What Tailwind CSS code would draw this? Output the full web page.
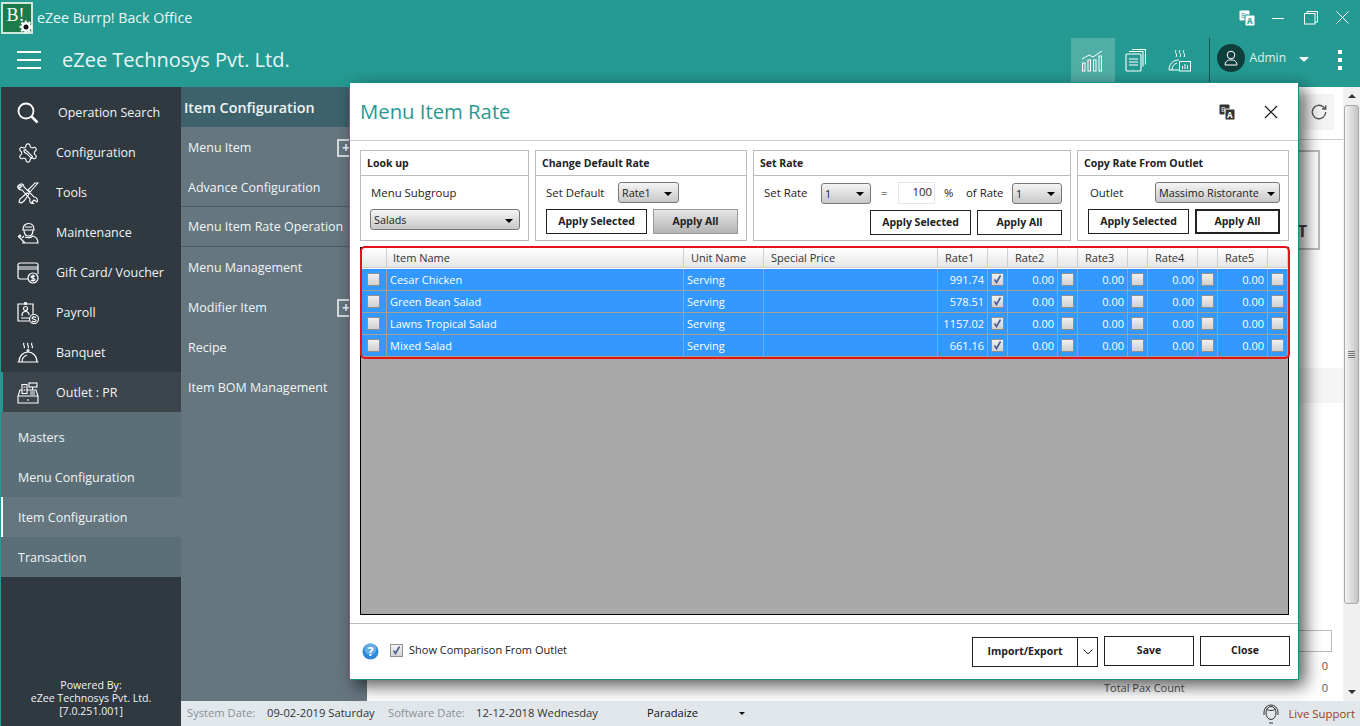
<!DOCTYPE html>
<html lang="en">
<head>
  <meta charset="UTF-8" />
  <title>eZee Burrp! Back Office</title>
  <script src="https://cdn.jsdelivr.net/npm/@tailwindcss/browser@4"></script>
</head>
<body class="bg-white">
<div class="relative w-[1360px] h-[726px] overflow-hidden flex flex-col bg-[#259a92] font-['Open_Sans','Noto_Sans',sans-serif] text-[12px]">

  <!-- window title bar -->
  <div class="h-[35px] flex items-center text-white shrink-0">
    <div class="relative ml-[1px] w-[32px] h-[32px] bg-[#1d7a4b] border-2 border-[#cfe6d8] flex items-start justify-center">
      <span class="font-['Liberation_Serif',serif] text-[18px] leading-[22px] text-white pr-[3px]">B!</span>
      <svg class="absolute right-[-2px] bottom-[-2px]" width="14" height="14" viewBox="0 0 14 14"><circle cx="7" cy="7" r="5" fill="#fff"/><circle cx="7" cy="7" r="5.500" fill="none" stroke="#fff" stroke-width="2" stroke-dasharray="2 2"/><circle cx="7" cy="7" r="2.500" fill="#111"/></svg>
    </div>
    <span class="ml-[4px] text-[14.2px] text-[#eaf6f5]">eZee Burrp! Back Office</span>
    <div class="ml-auto flex items-center">
      <svg width="16" height="16" viewBox="0 0 16 16"><rect x="0.5" y="0.5" width="10" height="10" rx="1" fill="#fff"/><rect x="6" y="5" width="10" height="11" rx="1" fill="#fff" stroke="#259a92"/><text x="8" y="14" font-size="8" font-weight="700" fill="#259a92" font-family="Open Sans">A</text><text x="2" y="8" font-size="7" fill="#259a92" font-family="Open Sans">B</text></svg>
      <svg class="ml-[17px]" width="12" height="12" viewBox="0 0 12 12"><path d="M0 6.500h12" stroke="#fff"/></svg>
      <svg class="ml-[20px]" width="14" height="14" viewBox="0 0 14 14" fill="none" stroke="#fff"><rect x="0.5" y="2.500" width="10.500" height="10.500"/><path d="M3 2.500V.5h10.500V11h-2.500"/></svg>
      <svg class="ml-[18px] mr-[11px]" width="13" height="13" viewBox="0 0 13 13"><path d="M.5.5l12 12M12.500.5l-12 12" stroke="#fff"/></svg>
    </div>
  </div>

  <!-- top nav -->
  <div class="h-[52px] flex items-center text-white shrink-0">
    <div class="ml-[17px] mb-[2px] w-[24px] flex flex-col gap-[6px]">
      <div class="h-[2px] bg-white"></div>
      <div class="h-[2px] bg-white"></div>
      <div class="h-[2px] bg-white"></div>
    </div>
    <span class="ml-[21px] mb-[2px] text-[20px] text-[#eaf6f5]">eZee Technosys Pvt. Ltd.</span>
    <div class="ml-auto flex items-center h-[44px] mb-[2px]">
      <div class="w-[44px] h-[44px] bg-white/20 flex items-center justify-center">
        <svg width="24" height="24" viewBox="0 0 24 24" fill="none" stroke="#fff" stroke-width="1"><path d="M1 11l7-4 4 2 9-6"/><rect x="1.500" y="15" width="2.500" height="8"/><rect x="7" y="12" width="2.500" height="11"/><rect x="12.500" y="12" width="2.500" height="11"/><rect x="18" y="8" width="2.500" height="15"/></svg>
      </div>
      <svg class="ml-[10px]" width="21" height="23" viewBox="0 0 21 23" fill="none" stroke="#fff" stroke-width="1.100"><rect x="1" y="5" width="15" height="17" rx="1"/><path d="M4 2.500h14v15M7 .5h13.500v15M4 10h9M4 13h9M4 16h9"/></svg>
      <svg class="ml-[22px]" width="23" height="23" viewBox="0 0 23 23" fill="none" stroke="#fff" stroke-width="1"><path d="M8 1c-2 2.500 2 4 0 7M12 1c-2 2.500 2 4 0 7M16 1c-2 2.500 2 4 0 7M1 21c0-6 4-10 10-10"/><path d="M1 21h10M4 21c0-4 2-6 5-7"/><rect x="11.500" y="12.500" width="11" height="9.500"/><path d="M14.500 20v-3M17 20v-5M19.500 20v-4"/></svg>
      <div class="ml-[18px] w-[1px] h-[44px] bg-[#17514e]"></div>
      <div class="ml-[7px] mb-[4px] w-[28px] h-[28px] rounded-full bg-[#0f3f3d] flex items-center justify-center">
        <svg width="18" height="18" viewBox="0 0 18 18" fill="none" stroke="#fff" stroke-width="1"><circle cx="9" cy="6" r="3.800"/><path d="M3 16c0-3 2-4.500 3.800-5h4.400c1.800.5 3.800 2 3.800 5z"/></svg>
      </div>
      <span class="ml-[5px] mb-[4px] text-[12px] text-[#dff1ef]">Admin</span>
      <div class="ml-[13px] mb-[2px] w-0 h-0 border-l-[5px] border-r-[5px] border-t-[5px] border-l-transparent border-r-transparent border-t-white"></div>
      <div class="ml-[29px] mr-[18px] flex flex-col gap-[4px]">
        <div class="w-[4px] h-[4px] bg-white"></div>
        <div class="w-[4px] h-[4px] bg-white"></div>
        <div class="w-[4px] h-[4px] bg-white"></div>
      </div>
    </div>
  </div>

  <!-- body -->
  <div class="flex-1 flex min-h-0">

    <!-- main sidebar -->
    <div class="w-[181px] shrink-0 bg-[#303840] border-l border-[#259a92] flex flex-col text-[#f0f4f5] text-[12.5px]">
      <div class="h-[45px] pt-[7px] flex items-center pl-[16px]">
        <svg class="w-[22px] h-[22px]" viewBox="0 0 22 22" fill="none" stroke="#fff"><circle cx="9" cy="9" r="7.500" stroke-width="1.800"/><path d="M14.500 14.500l6 6" stroke-width="2.500"/></svg>
        <span class="ml-[19px]">Operation Search</span>
      </div>
      <div class="h-[40px] pt-[2px] flex items-center pl-[16px]">
        <svg class="w-[22px] h-[22px]" viewBox="0 0 24 24" fill="none" stroke="#fff" stroke-width="1.200"><path d="M12.220 2h-.44a2 2 0 0 0-2 2v.18a2 2 0 0 1-1 1.730l-.43.25a2 2 0 0 1-2 0l-.15-.08a2 2 0 0 0-2.730.730l-.22.380a2 2 0 0 0 .730 2.730l.15.1a2 2 0 0 1 1 1.720v.510a2 2 0 0 1-1 1.740l-.15.090a2 2 0 0 0-.730 2.730l.22.380a2 2 0 0 0 2.730.730l.15-.08a2 2 0 0 1 2 0l.43.25a2 2 0 0 1 1 1.730V20a2 2 0 0 0 2 2h.44a2 2 0 0 0 2-2v-.18a2 2 0 0 1 1-1.730l.43-.25a2 2 0 0 1 2 0l.15.08a2 2 0 0 0 2.730-.730l.22-.390a2 2 0 0 0-.730-2.730l-.15-.08a2 2 0 0 1-1-1.740v-.5a2 2 0 0 1 1-1.740l.15-.090a2 2 0 0 0 .730-2.730l-.22-.380a2 2 0 0 0-2.730-.730l-.15.08a2 2 0 0 1-2 0l-.43-.25a2 2 0 0 1-1-1.730V4a2 2 0 0 0-2-2z"/><path d="M9 8c1 2 1 2 3 3l5 5-1.500 1.500-5-5c-2-.5-3-1.500-3-3.500z"/></svg>
        <span class="ml-[17px]">Configuration</span>
      </div>
      <div class="h-[40px] pt-[2px] flex items-center pl-[16px]">
        <svg class="w-[22px] h-[22px]" viewBox="0 0 22 22" fill="none" stroke="#fff" stroke-width="1.100"><path d="M21 1l-8 9-2-2 7-7zM10 11l-7 6-1 3 2 1 3-2 5-7z"/><path d="M2 3c2-2 5-1 5 2l10 10c3 0 4 3 3 5l-3-2-2 2 2 2c-3 0-5-2-4-5L5 8C2 8 0 6 1 4l2 2 2-2z"/></svg>
        <span class="ml-[17px]">Tools</span>
      </div>
      <div class="h-[40px] pt-[2px] flex items-center pl-[16px]">
        <svg class="w-[22px] h-[22px]" viewBox="0 0 22 22" fill="none" stroke="#fff" stroke-width="1.200"><path d="M6 8c0-4 2-6.500 5.500-6.500S17 4 17 8zM7 8c0 4 2 6 4.500 6S16 12 16 8M8 5h7"/><path d="M7 14l-2 2M5 21h16c0-4-2-6-5-7-2 2-6 2-8 1M1 14l6 6M1 15l2-2 1 2M6 21l2-1"/></svg>
        <span class="ml-[17px]">Maintenance</span>
      </div>
      <div class="h-[40px] pt-[2px] flex items-center pl-[16px]">
        <svg class="w-[22px] h-[22px]" viewBox="0 0 22 22" fill="none" stroke="#fff" stroke-width="1.200"><path d="M12 17H3a2 2 0 0 1-2-2V3a2 2 0 0 1 2-2h16a2 2 0 0 1 2 2v9"/><path d="M1 5h20M1 7h20" /><circle cx="16" cy="16" r="5"/><path d="M18 14.500c-1-1-4-1-4 .5s4 1 4 2.500-3 1.500-4 .5M16 12.500v7"/></svg>
        <span class="ml-[17px]">Gift Card/ Voucher</span>
      </div>
      <div class="h-[40px] pt-[2px] flex items-center pl-[16px]">
        <svg class="w-[22px] h-[22px]" viewBox="0 0 22 22" fill="none" stroke="#fff" stroke-width="1.200"><path d="M12 19H1V2h15v10"/><circle cx="8.500" cy="1.500" r="1"/><circle cx="8.500" cy="6.500" r="2"/><path d="M5 14c0-3 1.500-4.500 3.500-4.500S12 11 12 13M4 16h8"/><circle cx="17" cy="17" r="4.500"/><path d="M19 15.500c-1-1-4-1-4 .5s4 1 4 2.500-3 1.500-4 .5"/></svg>
        <span class="ml-[17px]">Payroll</span>
      </div>
      <div class="h-[40px] pt-[2px] flex items-center pl-[16px]">
        <svg class="w-[22px] h-[22px]" viewBox="0 0 22 22" fill="none" stroke="#fff" stroke-width="1.200"><path d="M7 1c-2 2 2 3 0 5M11 1c-2 2 2 3 0 5M15 1c-2 2 2 3 0 5M0.500 20h21M2 20c0-6 4-10 9-10s9 4 9 10M5 20c0-4 2-6 5-7"/><circle cx="11" cy="8.500" r="1"/></svg>
        <span class="ml-[17px]">Banquet</span>
      </div>
      <div class="h-[40px] pt-[2px] flex items-center bg-[#3c444c] border-l-[3px] border-[#259a92] -ml-[1px] pl-[14px]">
        <svg class="w-[22px] h-[22px]" viewBox="0 0 22 22" fill="none" stroke="#fff" stroke-width="1.100"><path d="M1 21h20v-7l-2-6H3l-2 6zM1 14h20M10 18h2"/><rect x="5" y="2.500" width="5" height="9" fill="#3c444c"/><rect x="12" y="1" width="8" height="4"/><path d="M15.500 5v3M6.500 5h2M6.500 8h2M13 10h5M13 12h5"/></svg>
        <span class="ml-[17px]">Outlet : PR</span>
      </div>
      <div class="bg-[#5a6f78]">
        <div class="h-[45px] pt-[7px] flex items-center pl-[17px]">Masters</div>
        <div class="h-[40px] pt-[2px] flex items-center pl-[17px]">Menu Configuration</div>
        <div class="h-[40px] pt-[2px] flex items-center pl-[15px] bg-[#66767f] border-l-2 border-white">Item Configuration</div>
        <div class="h-[40px] pt-[2px] flex items-center pl-[17px]">Transaction</div>
      </div>
      <div class="mt-auto pb-[8px] text-center text-[10.6px] leading-[13px]">
        Powered By:<br />eZee Technosys Pvt. Ltd.<br />[7.0.251.001]
      </div>
    </div>

    <div class="flex-1 flex flex-col min-w-0">
      <div class="flex-1 flex min-h-0">
        <!-- sub menu -->
        <div class="w-[186px] shrink-0 bg-[#66767f] text-[#f0f4f5] text-[12.5px] flex flex-col">
          <div class="h-[40px] pt-[2px] pl-[3px] flex items-center bg-[#3e626c] text-[14.3px] font-semibold">Item Configuration</div>
          <div class="h-[40px] pt-[2px] pl-[7px] pr-[12px] flex items-center">Menu Item
            <div class="ml-auto w-[18px] h-[18px] border-2 border-[#d5dbde] flex items-center justify-center text-[14px] font-bold leading-none">+</div>
          </div>
          <div class="h-[40px] pt-[3px] pl-[7px] flex items-center border-b border-[#4c5d66]">Advance Configuration</div>
          <div class="h-[40px] pt-[2px] pl-[7px] flex items-center border-b border-[#4c5d66]">Menu Item Rate Operation</div>
          <div class="h-[40px] pt-[2px] pl-[7px] flex items-center">Menu Management</div>
          <div class="h-[40px] pt-[2px] pl-[7px] pr-[12px] flex items-center">Modifier Item
            <div class="ml-auto w-[18px] h-[18px] border-2 border-[#d5dbde] flex items-center justify-center text-[14px] font-bold leading-none">+</div>
          </div>
          <div class="h-[40px] pt-[2px] pl-[7px] flex items-center">Recipe</div>
          <div class="h-[40px] pt-[2px] pl-[7px] flex items-center">Item BOM Management</div>
        </div>

        <!-- page behind the dialog -->
        <div class="flex-1 flex flex-col bg-white text-[#555]">
          <div class="h-[53px] border-b border-[#ccc] flex justify-end items-start pt-[7px] pr-[9px]">
            <div class="w-[31px] h-[36px] bg-[#f4f4f4] flex items-center justify-center">
              <svg width="18" height="18" viewBox="0 0 24 24" fill="none" stroke="#555" stroke-width="1.800"><path d="M21 12a9 9 0 1 1-3-6.700L21 8M21 3v5h-5"/></svg>
            </div>
          </div>
          <div class="self-end mt-[10px] mr-[23px] w-[400px] h-[100px] border-2 border-[#bbb] flex items-end justify-end pr-[11px] pb-[5px] text-[16px] font-bold text-[#444]">T</div>
          <div class="mt-[118px] h-[35px] bg-[#f5f5f5]"></div>
          <div class="mt-auto self-end mr-[11px] w-[300px] h-[22px] border border-[#bbb]"></div>
          <div class="flex justify-end pr-[15px] mt-[7px] h-[14px] items-center text-[11px]">0</div>
          <div class="flex justify-between items-center mt-[8px] h-[14px] pt-[1px] pr-[15px] pl-[737px] text-[11px]">
            <span>Total Pax Count</span><span>0</span>
          </div>
          <div class="h-[6px]"></div>
        </div>

        <!-- scrollbar -->
        <div class="w-[17px] shrink-0 bg-[#f0f0f0] flex flex-col items-center">
          <div class="h-[18px] flex items-center"><div class="w-0 h-0 border-l-[4px] border-r-[4px] border-b-[4px] border-l-transparent border-r-transparent border-b-[#333]"></div></div>
          <div class="w-[15px] h-[499px] border border-[#a8a8a8] rounded-[3px] bg-gradient-to-r from-[#f4f4f4] to-[#c4c4c4] flex flex-col items-center justify-center gap-[1px]">
            <div class="w-[7px] h-[1px] bg-[#777]"></div><div class="w-[7px] h-[1px] bg-[#777]"></div><div class="w-[7px] h-[1px] bg-[#777]"></div><div class="w-[7px] h-[1px] bg-[#777]"></div>
          </div>
          <div class="mt-auto h-[18px] flex items-center"><div class="w-0 h-0 border-l-[4px] border-r-[4px] border-t-[4px] border-l-transparent border-r-transparent border-t-[#333]"></div></div>
        </div>
      </div>

      <!-- status bar -->
      <div class="h-[25px] shrink-0 bg-[#e2e7eb] flex items-center pl-[6px] text-[11.2px] text-[#333]">
        <span class="text-[#8a9096] w-[80px]">System Date:</span>
        <span class="w-[121px]">09-02-2019 Saturday</span>
        <span class="text-[#8a9096] w-[88px]">Software Date:</span>
        <span class="w-[171px]">12-12-2018 Wednesday</span>
        <span class="text-[#111]">Paradaize</span>
        <div class="ml-[41px] w-0 h-0 border-l-[3px] border-r-[3px] border-t-[3px] border-l-transparent border-r-transparent border-t-[#111]"></div>
        <div class="ml-auto flex items-center mr-[5px]">
          <svg width="18" height="20" viewBox="0 0 18 20" fill="none" stroke="#333"><ellipse cx="9" cy="9" rx="5" ry="6.500"/><path d="M2 11V8a7 7 0 0 1 14 0v3M4 5c3 2 7 2 10 0M7 19h4"/></svg>
          <span class="ml-[8px] text-[11.4px] text-[#9c3b17]">Live Support</span>
        </div>
      </div>
    </div>
  </div>

  <!-- Menu Item Rate dialog -->
  <div class="absolute left-[349px] top-[82px] w-[950px] h-[598px] bg-white border border-[#1c8f87] shadow-[6px_6px_16px_rgba(0,0,0,0.65)] flex flex-col text-[#222]">
    <div class="h-[58px] shrink-0 border-b border-[#ccc] flex items-center pl-[10px]">
      <span class="text-[20.3px] text-[#259a92]">Menu Item Rate</span>
      <svg class="ml-auto" width="16" height="16" viewBox="0 0 16 16"><rect x="0.5" y="0.5" width="10" height="10" rx="1" fill="#333"/><rect x="6" y="5" width="10" height="11" rx="1" fill="#333" stroke="#fff"/><text x="8" y="14" font-size="8" font-weight="700" fill="#fff" font-family="Open Sans">A</text><text x="2" y="8" font-size="7" fill="#fff" font-family="Open Sans">B</text></svg>
      <svg class="ml-[29px] mr-[20px]" width="14" height="14" viewBox="0 0 14 14"><path d="M1 1l12 12M13 1L1 13" stroke="#111" stroke-width="1.200"/></svg>
    </div>

    <div class="ml-[10px] mt-[9px] flex gap-[6px] h-[91px] shrink-0 text-[11.4px]">
      <div class="w-[169px] border border-[#bbb] flex flex-col">
        <div class="h-[25px] pt-[2px] border-b border-[#bbb] pl-[6px] flex items-center font-bold text-[10.5px]">Look up</div>
        <div class="pl-[10px] mt-[9px] leading-[16px]">Menu Subgroup</div>
        <div class="ml-[9px] mt-[8px] w-[150px] h-[21px] pt-[2px] rounded-[3px] border border-[#777] bg-gradient-to-b from-[#f5f5f5] to-[#c8c8c8] flex items-center px-[3px] text-[10.8px]">Salads
          <div class="ml-auto mr-[3px] w-0 h-0 border-l-[4px] border-r-[4px] border-t-[4px] border-l-transparent border-r-transparent border-t-black"></div>
        </div>
      </div>

      <div class="w-[212px] border border-[#bbb] flex flex-col">
        <div class="h-[25px] pt-[2px] border-b border-[#bbb] pl-[6px] flex items-center font-bold text-[10.5px]">Change Default Rate</div>
        <div class="flex items-center mt-[6px] pl-[10px]">
          <span class="w-[72px]">Set Default</span>
          <div class="w-[61px] h-[21px] pt-[2px] rounded-[3px] border border-[#777] bg-gradient-to-b from-[#f5f5f5] to-[#c8c8c8] flex items-center px-[3px] text-[10.8px]">Rate1
            <div class="ml-auto mr-[3px] w-0 h-0 border-l-[4px] border-r-[4px] border-t-[4px] border-l-transparent border-r-transparent border-t-black"></div>
          </div>
        </div>
        <div class="flex mt-[6px] pl-[10px] gap-[6px] font-bold text-[10.5px]">
          <div class="w-[101px] h-[25px] pt-[1px] border border-[#222] flex items-center justify-center">Apply Selected</div>
          <div class="w-[85px] h-[25px] pt-[1px] border border-[#999] bg-gradient-to-b from-[#e6e6e6] to-[#b4b4b4] flex items-center justify-center">Apply All</div>
        </div>
      </div>

      <div class="w-[318px] border border-[#bbb] flex flex-col">
        <div class="h-[25px] pt-[2px] border-b border-[#bbb] pl-[6px] flex items-center font-bold text-[10.5px]">Set Rate</div>
        <div class="flex items-center mt-[6px] pl-[10px]">
          <span class="w-[57px]">Set Rate</span>
          <div class="w-[50px] h-[21px] pt-[2px] rounded-[3px] border border-[#777] bg-gradient-to-b from-[#f5f5f5] to-[#c8c8c8] flex items-center px-[3px] text-[10.8px]">1
            <div class="ml-auto mr-[3px] w-0 h-0 border-l-[4px] border-r-[4px] border-t-[4px] border-l-transparent border-r-transparent border-t-black"></div>
          </div>
          <span class="ml-[10px] w-[17px]">=</span>
          <div class="w-[37px] h-[22px] border border-[#e6e6ee] text-right pr-[2px] leading-[18px]">100</div>
          <span class="ml-[9px] w-[22px]">%</span>
          <span class="w-[46px]">of Rate</span>
          <div class="w-[50px] h-[21px] pt-[2px] rounded-[3px] border border-[#777] bg-gradient-to-b from-[#f5f5f5] to-[#c8c8c8] flex items-center px-[3px] text-[10.8px]">1
            <div class="ml-auto mr-[3px] w-0 h-0 border-l-[4px] border-r-[4px] border-t-[4px] border-l-transparent border-r-transparent border-t-black"></div>
          </div>
        </div>
        <div class="flex mt-[6px] pl-[116px] gap-[6px] font-bold text-[10.5px]">
          <div class="w-[101px] h-[25px] pt-[1px] border border-[#222] flex items-center justify-center">Apply Selected</div>
          <div class="w-[85px] h-[25px] pt-[1px] border border-[#222] flex items-center justify-center">Apply All</div>
        </div>
      </div>

      <div class="w-[212px] border border-[#bbb] flex flex-col">
        <div class="h-[25px] pt-[2px] border-b border-[#bbb] pl-[6px] flex items-center font-bold text-[10.5px]">Copy Rate From Outlet</div>
        <div class="flex items-center mt-[6px] pl-[12px]">
          <span class="w-[65px]">Outlet</span>
          <div class="w-[125px] h-[21px] pt-[2px] rounded-[3px] border border-[#777] bg-gradient-to-b from-[#f5f5f5] to-[#c8c8c8] flex items-center px-[3px] text-[10.8px]">Massimo Ristorante
            <div class="ml-auto mr-[1px] w-0 h-0 border-l-[4px] border-r-[4px] border-t-[4px] border-l-transparent border-r-transparent border-t-black"></div>
          </div>
        </div>
        <div class="flex mt-[6px] pl-[10px] gap-[6px] font-bold text-[10.5px]">
          <div class="w-[101px] h-[25px] pt-[1px] border border-[#222] flex items-center justify-center">Apply Selected</div>
          <div class="w-[85px] h-[25px] pt-[1px] border-2 border-[#222] flex items-center justify-center">Apply All</div>
        </div>
      </div>
    </div>

    <!-- rate grid -->
    <div class="relative ml-[10px] mt-[6px] w-[929px] h-[368px] shrink-0 border border-black bg-[#a9a9a9] text-[11px]">
      <div id="grid" class="grid grid-cols-[26px_297px_80px_174px_50px_20px_50px_20px_50px_20px_50px_20px_50px_20px]"></div>
      <div class="absolute left-[-1px] top-[-2px] w-[930px] h-[113px] border-2 border-[#e5121a] rounded-[5px]"></div>
    </div>

    <div class="mt-[8px] border-t border-[#bbb] flex-1 flex items-center pl-[12px] pr-[8px] relative">
      <svg width="17" height="17" viewBox="0 0 17 17"><circle cx="8.500" cy="8.500" r="8" fill="#2e86d8"/><circle cx="8.500" cy="6" r="6" fill="#8cc6f5" opacity="0.6"/><text x="8.500" y="13" text-anchor="middle" font-size="12" font-weight="700" fill="#fff" font-family="Open Sans">?</text></svg>
      <div class="ml-[11px] mb-[2px] w-[13px] h-[13px] border border-[#8e8f8f] bg-gradient-to-b from-[#f4f4f4] to-[#d4d4d4] flex items-center justify-center">
        <svg width="11" height="11" viewBox="0 0 11 11"><path d="M2.500 5.500l2 3 4-7" fill="none" stroke="#4a5a94" stroke-width="1.600"/></svg>
      </div>
      <span class="ml-[6px] mb-[2px] text-[11px]">Show Comparison From Outlet</span>
      <div class="ml-auto flex items-center gap-[6px] font-bold text-[10.5px]">
        <div class="flex w-[126px] h-[30px] mt-[1px] border border-[#222]">
          <div class="flex-1 border-r border-[#222] flex items-center justify-center">Import/Export</div>
          <div class="w-[19px] flex items-center justify-center">
            <svg width="10" height="6" viewBox="0 0 10 6"><path d="M.5.5L5 5 9.500.5" fill="none" stroke="#222"/></svg>
          </div>
        </div>
        <div class="w-[90px] h-[30px] -mt-[1px] border border-[#222] flex items-center justify-center">Save</div>
        <div class="w-[90px] h-[30px] -mt-[1px] border border-[#222] flex items-center justify-center">Close</div>
      </div>
    </div>
  </div>
</div>

<script>
  const items = [
    { name: 'Cesar Chicken', rate: '991.74' },
    { name: 'Green Bean Salad', rate: '578.51' },
    { name: 'Lawns Tropical Salad', rate: '1157.02' },
    { name: 'Mixed Salad', rate: '661.16' }
  ];

  const headCell = 'h-[20px] pt-[2px] border-r border-b border-[#d0d0d0] bg-gradient-to-b from-white to-[#e6e6e6] flex items-center text-[#333]';
  const rowCell = 'h-[22px] border-r border-b border-[#a89f93] bg-[#3399ff] flex items-center text-white';
  const tick = '<svg width="11" height="11" viewBox="0 0 11 11"><path d="M2.500 5.500l2 3 4-7" fill="none" stroke="#4a5a94" stroke-width="1.600"/></svg>';

  function box(checked) {
    return `<div class="w-[13px] h-[13px] border border-[#8e8f8f] bg-gradient-to-b from-[#f0f0f0] to-[#d0d0d0] flex items-center justify-center">${checked ? tick : ''}</div>`;
  }

  let html = `<div class="${headCell}"></div>`;
  ['Item Name', 'Unit Name', 'Special Price'].forEach((t, i) => {
    html += `<div class="${headCell} ${i === 0 ? 'pl-[6px]' : 'pl-[7px]'}">${t}</div>`;
  });
  ['Rate1', 'Rate2', 'Rate3', 'Rate4', 'Rate5'].forEach(t => {
    html += `<div class="${headCell} pl-[7px]">${t}</div><div class="${headCell}"></div>`;
  });
  // small white gap under the header
  html += '<div class="col-span-full h-[1px] bg-white"></div>';

  items.forEach(item => {
    html += `<div class="${rowCell} justify-center">${box(false)}</div>`;
    html += `<div class="${rowCell} pl-[3px] pt-[2px]">${item.name}</div>`;
    html += `<div class="${rowCell} pl-[3px] pt-[2px]">Serving</div>`;
    html += `<div class="${rowCell}"></div>`;
    [item.rate, '0.00', '0.00', '0.00', '0.00'].forEach((r, i) => {
      html += `<div class="${rowCell} justify-end pr-[3px] pt-[2px]">${r}</div>`;
      html += `<div class="${rowCell} justify-center">${box(i === 0)}</div>`;
    });
  });
  document.getElementById('grid').innerHTML = html;
</script>
</body>
</html>
